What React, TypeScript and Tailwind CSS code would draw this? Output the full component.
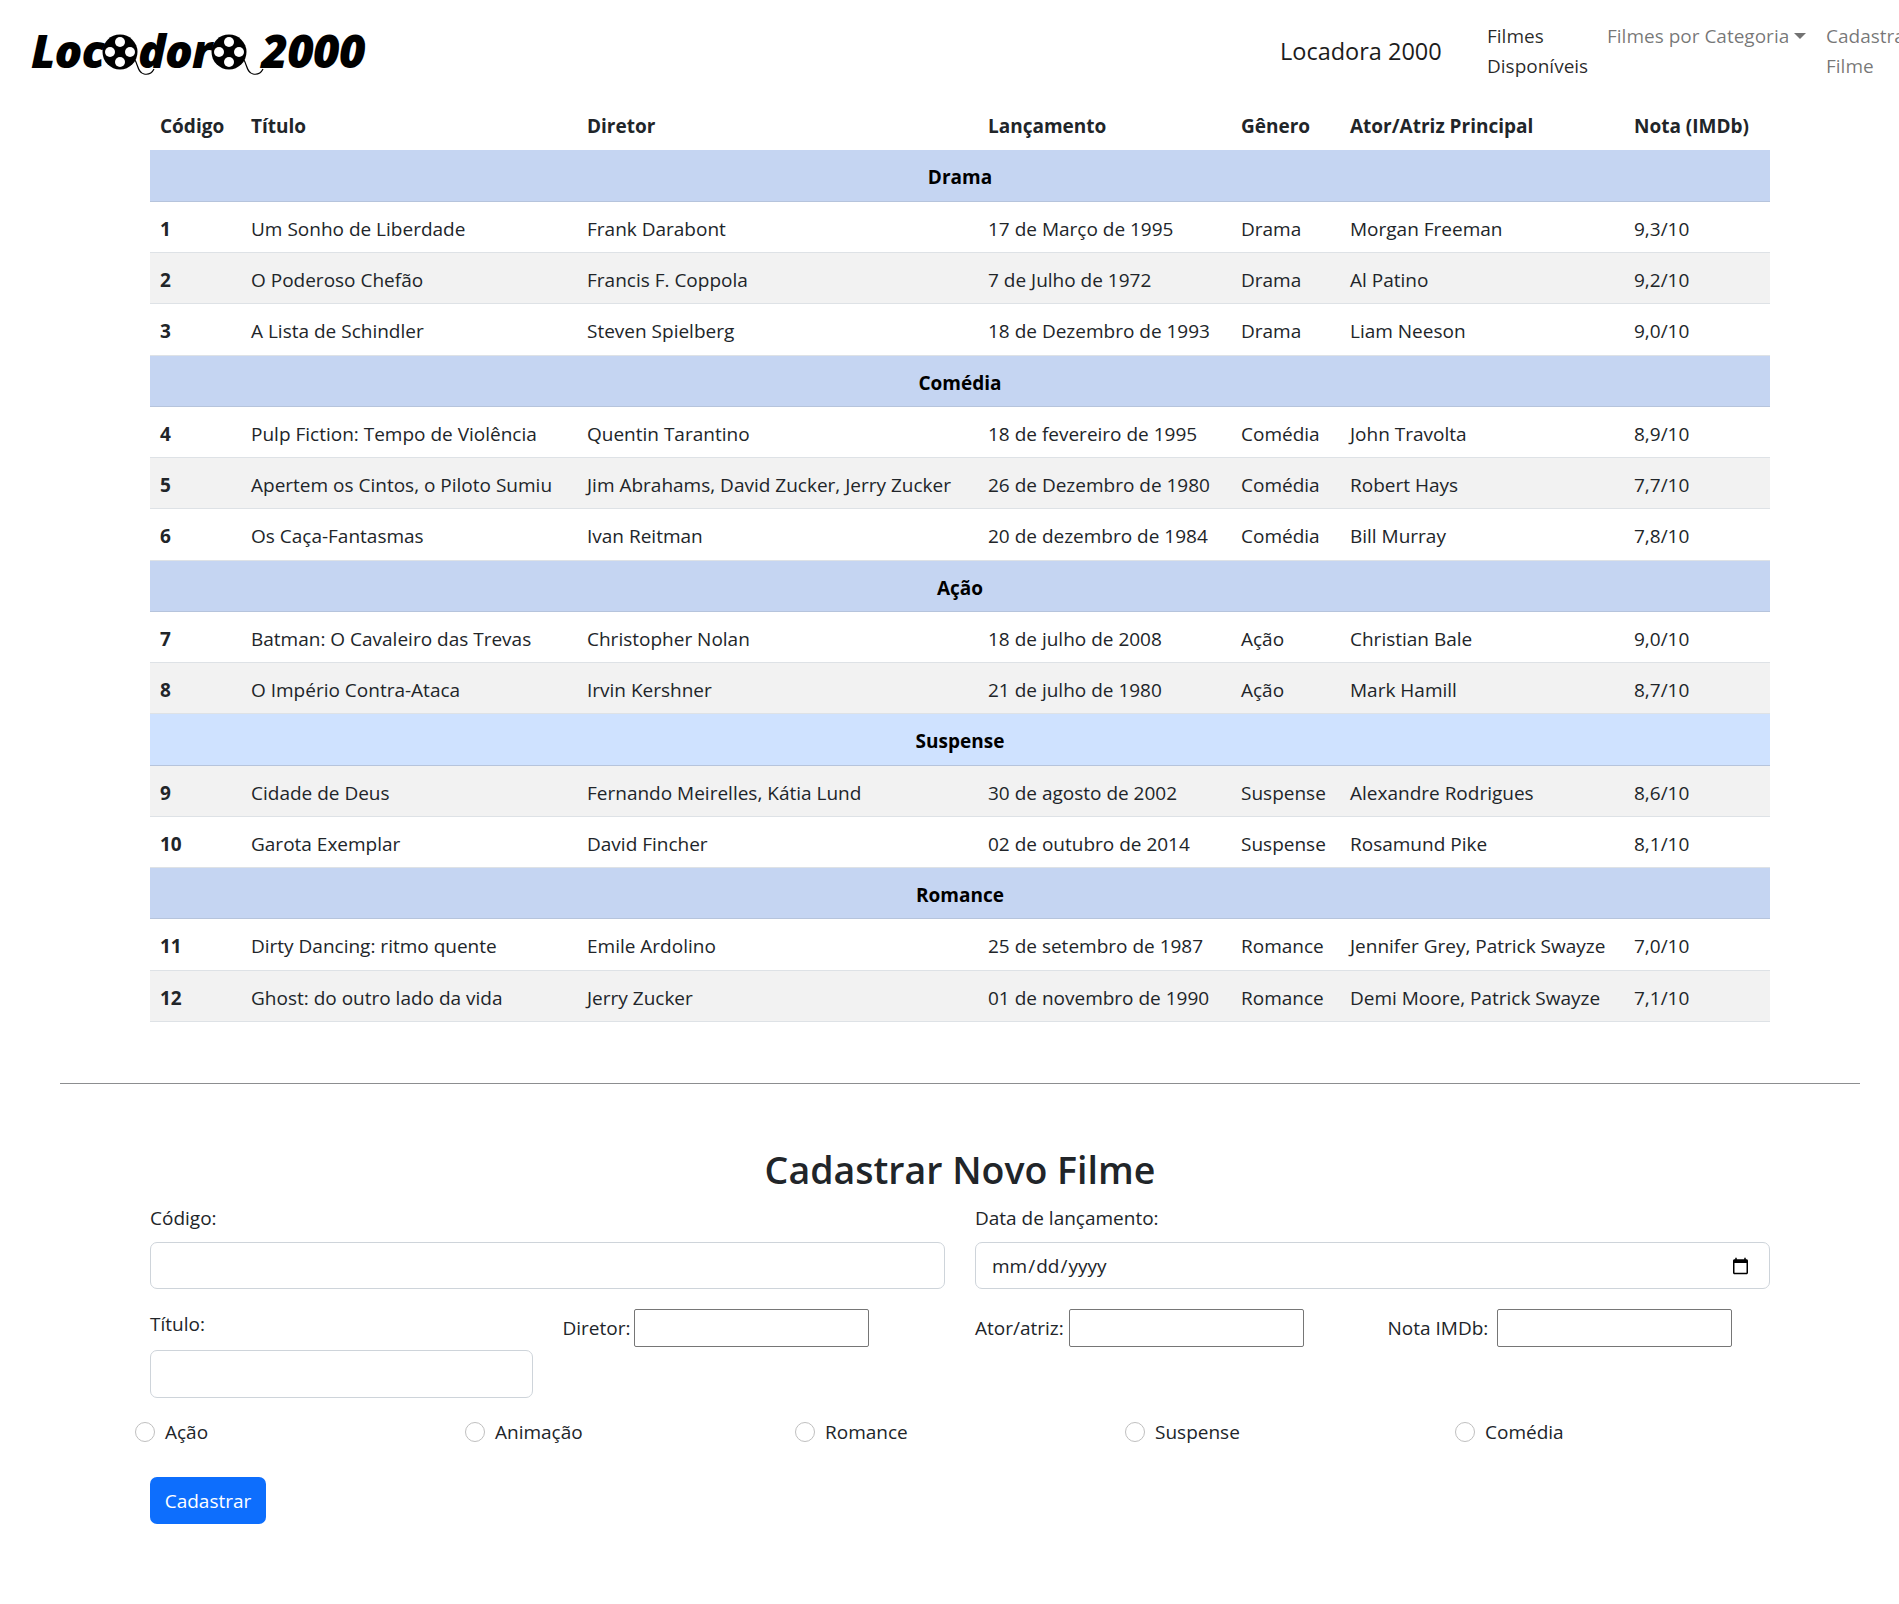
type Movie = {
  id: number;
  title: string;
  director: string;
  date: string;
  genre: string;
  actor: string;
  score: string;
};

const groups: { name: string; striped: boolean; movies: Movie[] }[] = [
  {
    name: 'Drama',
    striped: true,
    movies: [
      { id: 1, title: 'Um Sonho de Liberdade', director: 'Frank Darabont', date: '17 de Março de 1995', genre: 'Drama', actor: 'Morgan Freeman', score: '9,3/10' },
      { id: 2, title: 'O Poderoso Chefão', director: 'Francis F. Coppola', date: '7 de Julho de 1972', genre: 'Drama', actor: 'Al Patino', score: '9,2/10' },
      { id: 3, title: 'A Lista de Schindler', director: 'Steven Spielberg', date: '18 de Dezembro de 1993', genre: 'Drama', actor: 'Liam Neeson', score: '9,0/10' },
    ],
  },
  {
    name: 'Comédia',
    striped: true,
    movies: [
      { id: 4, title: 'Pulp Fiction: Tempo de Violência', director: 'Quentin Tarantino', date: '18 de fevereiro de 1995', genre: 'Comédia', actor: 'John Travolta', score: '8,9/10' },
      { id: 5, title: 'Apertem os Cintos, o Piloto Sumiu', director: 'Jim Abrahams, David Zucker, Jerry Zucker', date: '26 de Dezembro de 1980', genre: 'Comédia', actor: 'Robert Hays', score: '7,7/10' },
      { id: 6, title: 'Os Caça-Fantasmas', director: 'Ivan Reitman', date: '20 de dezembro de 1984', genre: 'Comédia', actor: 'Bill Murray', score: '7,8/10' },
    ],
  },
  {
    name: 'Ação',
    striped: true,
    movies: [
      { id: 7, title: 'Batman: O Cavaleiro das Trevas', director: 'Christopher Nolan', date: '18 de julho de 2008', genre: 'Ação', actor: 'Christian Bale', score: '9,0/10' },
      { id: 8, title: 'O Império Contra-Ataca', director: 'Irvin Kershner', date: '21 de julho de 1980', genre: 'Ação', actor: 'Mark Hamill', score: '8,7/10' },
    ],
  },
  {
    name: 'Suspense',
    striped: false,
    movies: [
      { id: 9, title: 'Cidade de Deus', director: 'Fernando Meirelles, Kátia Lund', date: '30 de agosto de 2002', genre: 'Suspense', actor: 'Alexandre Rodrigues', score: '8,6/10' },
      { id: 10, title: 'Garota Exemplar', director: 'David Fincher', date: '02 de outubro de 2014', genre: 'Suspense', actor: 'Rosamund Pike', score: '8,1/10' },
    ],
  },
  {
    name: 'Romance',
    striped: true,
    movies: [
      { id: 11, title: 'Dirty Dancing: ritmo quente', director: 'Emile Ardolino', date: '25 de setembro de 1987', genre: 'Romance', actor: 'Jennifer Grey, Patrick Swayze', score: '7,0/10' },
      { id: 12, title: 'Ghost: do outro lado da vida', director: 'Jerry Zucker', date: '01 de novembro de 1990', genre: 'Romance', actor: 'Demi Moore, Patrick Swayze', score: '7,1/10' },
    ],
  },
];

const headers = ['Código', 'Título', 'Diretor', 'Lançamento', 'Gênero', 'Ator/Atriz Principal', 'Nota (IMDb)'];
const radios = ['Ação', 'Animação', 'Romance', 'Suspense', 'Comédia'];
const striped = [2, 5, 8, 9, 12];

function Reel({ className }: { className?: string }) {
  return (
    <svg width="36" height="36" viewBox="0 0 36 36" className={`shrink-0 overflow-visible ${className}`}>
      <circle cx="18" cy="18" r="17.5" fill="#000" />
      <circle cx="18" cy="8" r="5" fill="#fff" />
      <circle cx="18" cy="28" r="5" fill="#fff" />
      <circle cx="8" cy="18" r="5" fill="#fff" />
      <circle cx="28" cy="18" r="5" fill="#fff" />
      <path d="M33 26c3 5 3 13 9 14 5 1 8-1 10-5" fill="none" stroke="#000" strokeWidth="1.2" />
    </svg>
  );
}

function Logo() {
  return (
    <div className="flex items-center w-[1280px] pl-[31px] pt-[20px] font-['Open_Sans',sans-serif] text-[46px] font-extrabold italic leading-[60px] text-black tracking-[-0.8px]">
      <span>Loc</span>
      <Reel className="-ml-[2px] mt-[3px]" />
      <span>dor</span>
      <Reel className="mt-[3px]" />
      <span className="ml-[14px]">2000</span>
    </div>
  );
}

function SmallField({ label, labelWidth }: { label: string; labelWidth: string }) {
  return (
    <label className="flex items-center gap-[5px] w-full">
      <span className={`whitespace-nowrap ${labelWidth}`}>{label}</span>
      <input type="text" className="w-[235px] h-[38px] bg-white border border-[#767676] rounded-[2px]" />
    </label>
  );
}

export default function App() {
  return (
    <div className="min-h-[1604px] w-[1899px] overflow-hidden bg-white font-['Open_Sans',sans-serif] text-[19px] leading-[30px] text-[#212529]">
      <nav className="flex items-start h-[99px] w-[2000px]">
        <Logo />
        <div className="flex items-start pt-[21px]">
          <a className="w-[207px] pt-[15px] text-[23.5px] text-[#1c1c1c]">Locadora 2000</a>
          <a className="w-[120px] text-[#000000d9]">Filmes Disponíveis</a>
          <a className="flex items-start w-[219px] text-[#0000008c]">
            Filmes por Categoria
            <span className="ml-[5px] mt-[12px] border-x-[6px] border-t-[6px] border-x-transparent border-t-[#0000008c]" />
          </a>
          <a className="w-[120px] text-[#0000008c]">Cadastrar Filme</a>
        </div>
      </nav>

      <div className="ml-[150px] w-[1620px]">
        <table className="w-full table-fixed border-collapse">
          <colgroup>
            <col className="w-[91px]" />
            <col className="w-[336px]" />
            <col className="w-[401px]" />
            <col className="w-[253px]" />
            <col className="w-[109px]" />
            <col className="w-[284px]" />
            <col className="w-[146px]" />
          </colgroup>
          <thead>
            <tr className="h-[51px]">
              {headers.map((h) => (
                <th key={h} className="px-[10px] pt-[2px] text-left font-bold whitespace-nowrap text-[#212529]">
                  {h}
                </th>
              ))}
            </tr>
          </thead>
          {groups.map((group) => (
            <tbody key={group.name}>
              <tr className={`h-[51.25px] border-b border-[#b6c4dc] ${group.striped ? 'bg-[#c5d5f2]' : 'bg-[#cfe2ff]'}`}>
                <td colSpan={7} className="px-[10px] pt-[4px] text-center font-bold text-black">
                  {group.name}
                </td>
              </tr>
              {group.movies.map((m) => (
                <tr
                  key={m.id}
                  className={`h-[51.25px] border-b border-[#dee2e6] ${striped.includes(m.id) ? 'bg-[#f2f2f2]' : 'bg-white'}`}
                >
                  <td className="px-[10px] pt-[4px] font-bold">{m.id}</td>
                  <td className="px-[10px] pt-[4px] whitespace-nowrap">{m.title}</td>
                  <td className="px-[10px] pt-[4px] whitespace-nowrap">{m.director}</td>
                  <td className="px-[10px] pt-[4px] whitespace-nowrap">{m.date}</td>
                  <td className="px-[10px] pt-[4px] whitespace-nowrap">{m.genre}</td>
                  <td className="px-[10px] pt-[4px] whitespace-nowrap">{m.actor}</td>
                  <td className="px-[10px] pt-[4px] whitespace-nowrap">{m.score}</td>
                </tr>
              ))}
            </tbody>
          ))}
        </table>
      </div>

      <hr className="ml-[60px] mt-[61px] w-[1800px] border-t border-[#8c8e90]" />

      <form className="ml-[150px] w-[1620px] mt-[60px]">
        <h2 className="h-[60px] pt-[2px] text-center text-[37.5px] leading-[48px] font-semibold">Cadastrar Novo Filme</h2>
        <div className="grid grid-cols-2 gap-x-[30px] mt-[-1px]">
          <label className="block">
            <span className="block h-[39px]">Código:</span>
            <input type="text" className="block w-full h-[47px] bg-white border border-[#ced4da] rounded-[7px]" />
          </label>
          <label className="block">
            <span className="block h-[39px]">Data de lançamento:</span>
            <input
              type="date"
              className="block w-full h-[47px] pl-[15px] pr-[17px] pt-[2px] bg-white border border-[#ced4da] rounded-[7px]"
            />
          </label>
        </div>
        <div className="grid grid-cols-4 gap-x-[30px] mt-[20px] items-start">
          <label className="block">
            <span className="block h-[41px]">Título:</span>
            <input type="text" className="block w-full h-[48px] bg-white border border-[#ced4da] rounded-[7px]" />
          </label>
          <SmallField label="Diretor:" labelWidth="w-[66px]" />
          <SmallField label="Ator/atriz:" labelWidth="w-[89px]" />
          <SmallField label="Nota IMDb:" labelWidth="w-[104px]" />
        </div>
        <div className="grid grid-cols-5 w-[1650px] -ml-[15px] mt-[19px]">
          {radios.map((r) => (
            <label key={r} className="flex items-center gap-[10px] h-[30px]">
              <input type="radio" name="genero" className="appearance-none w-[20px] h-[20px] bg-white border border-[#bfbfbf] rounded-full" />
              <span>{r}</span>
            </label>
          ))}
        </div>
        <button type="button" className="block mt-[30px] w-[116px] h-[47px] pt-[1px] bg-[#0d6efd] text-white rounded-[7px]">
          Cadastrar
        </button>
      </form>
    </div>
  );
}
